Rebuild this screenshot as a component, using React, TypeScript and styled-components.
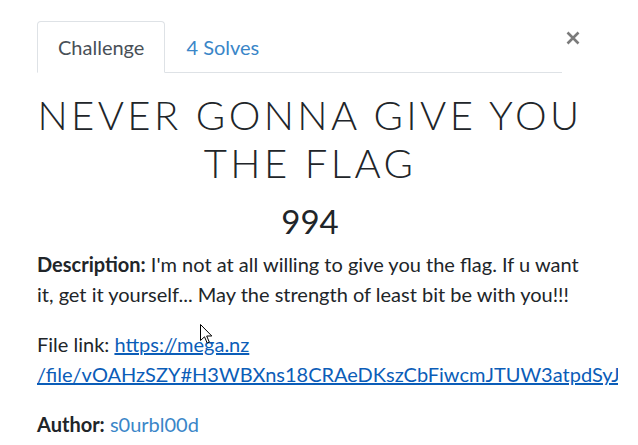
import React from "react";
import styled, { createGlobalStyle } from "styled-components";

const Global = createGlobalStyle`
  html, body { margin: 0; padding: 0; background: #fff; }
  body { font-family: Lato, "Liberation Sans", sans-serif; color: #212529; }
`;

const Modal = styled.div`
  position: relative;
  width: 546px;
  margin-left: 2px;
  padding: 21px 35px 0 35px;
  height: 424px;
  overflow: hidden;
  background: #fff;
`;

const Header = styled.div`
  display: flex;
  align-items: flex-start;
`;

const Tabs = styled.ul`
  flex: 1;
  display: flex;
  list-style: none;
  margin: 0;
  padding: 0;
  border-bottom: 1px solid #dee2e6;
`;

const Tab = styled.li<{ $active?: boolean }>`
  margin-bottom: -1px;
  padding: 10px 20px;
  font-size: 20px;
  line-height: 30px;
  border: 1px solid ${(p) => (p.$active ? "#dee2e6" : "transparent")};
  border-bottom-color: ${(p) => (p.$active ? "#fff" : "transparent")};
  border-radius: 4px 4px 0 0;
  color: ${(p) => (p.$active ? "#495057" : "#3a86c8")};
  background: ${(p) => (p.$active ? "#fff" : "transparent")};
`;

const Close = styled.button`
  width: 21px;
  height: 30px;
  margin-top: 2px;
  padding: 0;
  border: 0;
  background: none;
  display: flex;
  justify-content: center;
  align-items: center;
`;

const Title = styled.h2`
  margin: 18px 0 0;
  text-align: center;
  font-family: Lato, "Open Sans", sans-serif;
  font-weight: 300;
  font-size: 40px;
  line-height: 48px;
  letter-spacing: 3.4px;
  color: #212529;
`;

const Value = styled.h3`
  margin: 14px 0 0;
  text-align: center;
  font-family: Lato, sans-serif;
  font-weight: 400;
  font-size: 33px;
  line-height: 40px;
  color: #212529;
`;

const Body = styled.div`
  margin-top: 8px;
  font-size: 20px;
  line-height: 30px;
`;

const Para = styled.p`
  margin: 0 0 20px;
`;

const FileLink = styled.a`
  color: #0b5db8;
  text-decoration: underline;
  white-space: nowrap;
`;

const AuthorLink = styled.span`
  color: #3a86c8;
`;

const Cursor = styled.svg`
  position: absolute;
  left: 198px;
  top: 324px;
`;

export default function App() {
  return (
    <>
      <Global />
      <Modal>
        <Header>
          <Tabs>
            <Tab $active>Challenge</Tab>
            <Tab>4 Solves</Tab>
          </Tabs>
          <Close aria-label="Close">
            <svg width="14" height="14" viewBox="0 0 14 14">
              <path d="M1.5 1.5 L12.5 12.5 M12.5 1.5 L1.5 12.5" stroke="#7b7b7b" strokeWidth="2.6" strokeLinecap="butt" />
            </svg>
          </Close>
        </Header>
        <Title>NEVER GONNA GIVE YOU THE FLAG</Title>
        <Value>994</Value>
        <Body>
          <Para>
            <b>Description:</b> I'm not at all willing to give you the flag. If u want it, get it yourself... May the strength of least bit be with you!!!
          </Para>
          <Para>
            File link:{" "}
            <FileLink href="#">
              https://mega.nz
              <br />
              /file/vOAHzSZY#H3WBXns18CRAeDKszCbFiwcmJTUW3atpdSyJ8Rk0yzDc
            </FileLink>
          </Para>
          <Para>
            <b>Author:</b> <AuthorLink>s0urbl00d</AuthorLink>
          </Para>
        </Body>
        <Cursor width="13" height="20" viewBox="0 0 13 20">
          <path d="M0.5 0.5 L0.5 16.5 L4.5 12.8 L7.2 19 L9.3 18.1 L6.7 12 L11.8 12 Z" fill="#fff" stroke="#000" strokeWidth="1" strokeLinejoin="miter" />
        </Cursor>
      </Modal>
    </>
  );
}
